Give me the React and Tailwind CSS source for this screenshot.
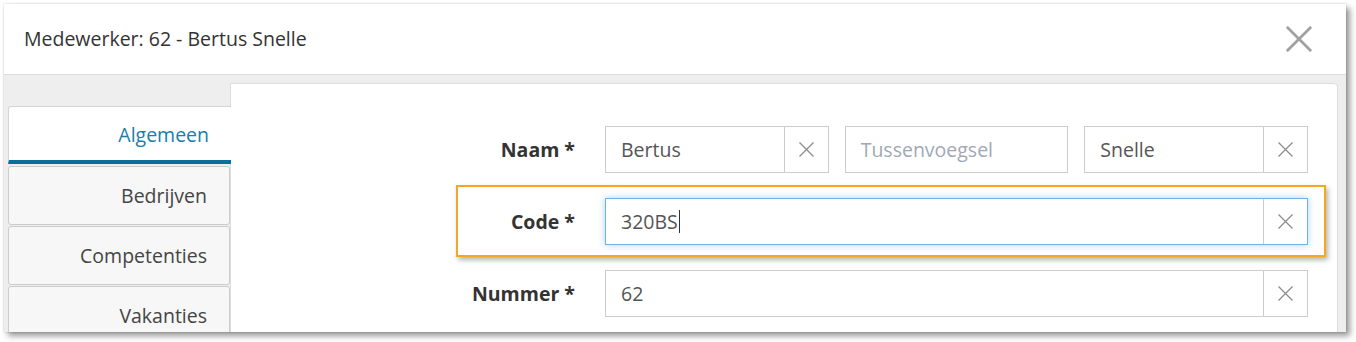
import React from "react";

function ClearIcon({ size = 15, stroke = "#8c8c8c", width = 1.3 }) {
    return (
        <svg width={size} height={size} viewBox="0 0 15 15">
            <path d="M0.5 0.5 L14.5 14.5 M14.5 0.5 L0.5 14.5" stroke={stroke} strokeWidth={width} fill="none" />
        </svg>
    );
}

function Field({ value, placeholder, clearable = true, focused = false, caret = false }) {
    return (
        <div
            className={`flex-1 flex h-[47px] bg-white border ${focused
                    ? "border-[#6db3e8] shadow-[0_0_7px_rgba(102,175,233,0.55)]"
                    : "border-[#cccccc]"
                }`}
        >
            <div className="flex-1 flex items-center pl-[15px] text-[19.5px]">
                {value ? (
                    <span className="text-[#555555]">{value}</span>
                ) : (
                    <span className="text-[#9fa8b7]">{placeholder}</span>
                )}
                {caret && <span className="inline-block w-[1px] h-[23px] bg-[#333333] ml-[1px]" />}
            </div>
            {clearable && (
                <div className="w-[44px] border-l border-[#cccccc] flex items-center justify-center">
                    <ClearIcon />
                </div>
            )}
        </div>
    );
}

function Row({ label, highlight = false, children }) {
    return (
        <div
            className={`ml-[225px] w-[870px] flex items-center border-2 pt-[11px] pb-[10px] pr-[16px] ${highlight
                    ? "border-[#f5a623] shadow-[2px_3px_5px_rgba(0,0,0,0.3)]"
                    : "border-transparent"
                }`}
        >
            <div className="w-[117px] text-right font-bold text-[19.5px] text-[#333333] shrink-0">
                {label}
            </div>
            <div className="flex-1 flex gap-[16px] ml-[30px]">{children}</div>
        </div>
    );
}

export default function App() {
    const tabs = ["Bedrijven", "Competenties", "Vakanties"];

    return (
        <div className="w-[1356px] h-[342px] bg-white overflow-hidden pt-[4px] pl-[4px] font-['Open_Sans',sans-serif]">
            <div className="w-[1342px] h-[328px] bg-white flex flex-col overflow-hidden shadow-[0_0_2px_rgba(0,0,0,0.2),4px_4px_6px_rgba(0,0,0,0.4)]">
                <div className="h-[71px] shrink-0 flex items-center justify-between pl-[20px] pr-[34px] border-b border-[#dddddd]">
                    <h1 className="text-[19.5px] text-[#333333]">Medewerker: 62 - Bertus Snelle</h1>
                    <ClearIcon size={26} stroke="#a0a0a0" width={1.6} />
                </div>

                <div className="flex-1 bg-[#eeeeee] flex pt-[8px] pl-[4px] pr-[8px] overflow-hidden">
                    <div className="w-[222px] shrink-0 pt-[23px] flex flex-col gap-[1px]">
                        <div className="relative z-10 shrink-0 w-[223px] h-[58px] mb-[1px] bg-white border-l border-t border-[#d4d4d4] rounded-tl-[3px] border-b-4 border-b-[#0b6e9a] flex items-center justify-end pt-[2px] pr-[22px] text-[19.5px] text-[#1b7daa]">
                            Algemeen
                        </div>
                        {tabs.map((t) => (
                            <div
                                key={t}
                                className="shrink-0 h-[59px] bg-[#f7f7f7] border border-[#cccccc] rounded-[3px] flex items-center justify-end pr-[22px] text-[19.5px] text-[#444444]"
                            >
                                {t}
                            </div>
                        ))}
                    </div>

                    <div className="flex-1 h-[400px] shrink-0 bg-white border border-[#dddddd] rounded-tr-[4px] pt-[29px] flex flex-col">
                        <Row label="Naam *">
                            <Field value="Bertus" />
                            <Field placeholder="Tussenvoegsel" clearable={false} />
                            <Field value="Snelle" />
                        </Row>
                        <Row label="Code *" highlight>
                            <Field value="320BS" focused caret />
                        </Row>
                        <Row label="Nummer *">
                            <Field value="62" />
                        </Row>
                    </div>
                </div>
            </div>
        </div>
    );
}
